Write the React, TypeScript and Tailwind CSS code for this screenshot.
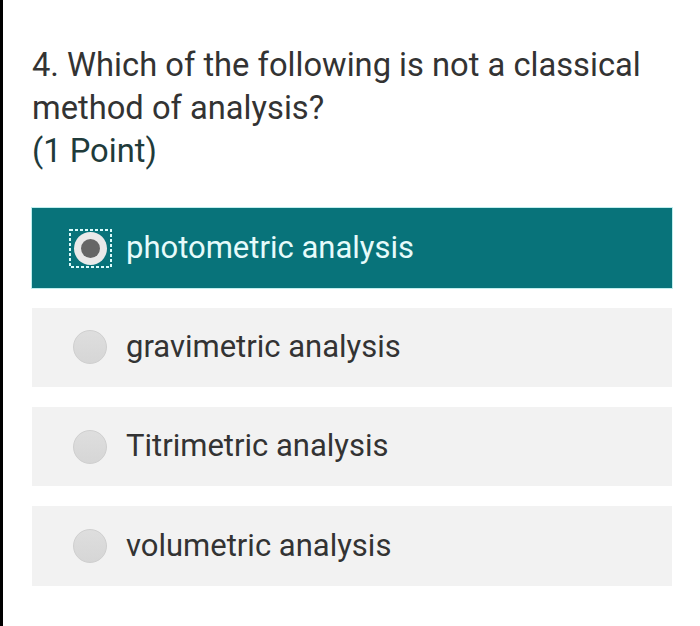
import React from "react";

const options = [
  "photometric analysis",
  "gravimetric analysis",
  "Titrimetric analysis",
  "volumetric analysis",
];

export default function App() {
  return (
    <div
      className="w-[700px] h-[626px] bg-white border-l-[3px] border-black overflow-hidden"
      style={{ fontFamily: "Roboto, 'Noto Sans', sans-serif" }}
    >
      <div className="pl-[29px] pr-[28px] pt-[44px]">
        <div className="text-[32.7px] leading-[43px] text-[#333333] whitespace-nowrap">
          <div>4. Which of the following is not a classical</div>
          <div>method of analysis?</div>
          <div className="text-[#1f3b3b]">(1 Point)</div>
        </div>
        <div className="mt-[35px] flex flex-col gap-[19.7px]">
          {options.map((o, i) =>
            i === 0 ? (
              <div
                key={o}
                className="h-[80px] bg-[#08737a] flex items-center pl-[37px] shadow-[0_0_0_1px_#bfeeee]"
              >
                <div className="relative w-[43px] h-[39px] flex items-center justify-center">
                  <svg className="absolute inset-0" width="43" height="39" viewBox="0 0 43 39">
                    <rect
                      x="1"
                      y="1"
                      width="41"
                      height="37"
                      fill="none"
                      stroke="#d9fbfb"
                      strokeWidth="2"
                      strokeDasharray="3 2"
                    />
                  </svg>
                  <div className="w-[33px] h-[33px] rounded-full bg-[#e9e9e9] flex items-center justify-center">
                    <div className="w-[19px] h-[19px] rounded-full bg-[#666666]" />
                  </div>
                </div>
                <span className="ml-[14px] text-[31px] text-[#e6fbfb]">{o}</span>
              </div>
            ) : (
              <div key={o} className="h-[79.5px] bg-[#f2f2f2] flex items-center pl-[41px]">
                <div className="w-[34px] h-[34px] rounded-full bg-gradient-to-b from-[#dedede] to-[#d6d6d6] border border-[#cfcfcf]" />
                <span className="ml-[19px] text-[31px] text-[#333333]">{o}</span>
              </div>
            )
          )}
        </div>
      </div>
    </div>
  );
}
